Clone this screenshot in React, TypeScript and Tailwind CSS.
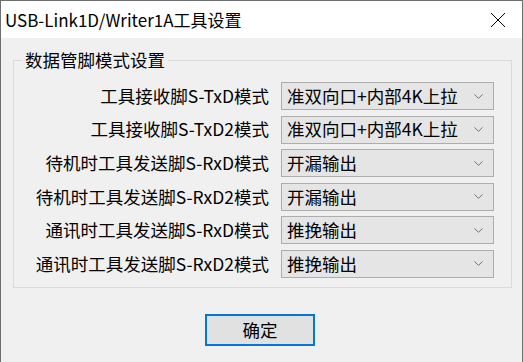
import { ChevronDown } from "lucide-react";

const rows = [
  { label: "工具接收脚S-TxD模式", value: "准双向口+内部4K上拉" },
  { label: "工具接收脚S-TxD2模式", value: "准双向口+内部4K上拉" },
  { label: "待机时工具发送脚S-RxD模式", value: "开漏输出" },
  { label: "待机时工具发送脚S-RxD2模式", value: "开漏输出" },
  { label: "通讯时工具发送脚S-RxD模式", value: "推挽输出" },
  { label: "通讯时工具发送脚S-RxD2模式", value: "推挽输出" },
];

const font = { fontFamily: '"Noto Sans CJK SC", "Noto Sans", sans-serif' };

function CloseIcon() {
  return (
    <svg width="16" height="16" viewBox="0 0 16 16" className="text-black">
      <path d="M1 1 L15 15 M15 1 L1 15" stroke="currentColor" strokeWidth="1" fill="none" />
    </svg>
  );
}

export default function App() {
  return (
    <div
      className="w-[523px] h-[362px] bg-[#f0f0f0] border-x border-t border-[#6e6e6e] flex flex-col overflow-hidden"
      style={font}
    >
      {/* title bar */}
      <div className="h-[37px] bg-white flex items-center justify-between pl-[4px] pr-[16px] shrink-0">
        <span className="text-[17px] text-black leading-none">USB-Link1D/Writer1A工具设置</span>
        <CloseIcon />
      </div>

      <fieldset className="ml-[12px] w-[499px] mt-[11px] border border-[#dadada] px-0 pt-[11px] pb-[9px]">
        <legend className="ml-[8px] px-[3px] text-[17.5px] leading-[22px] text-black">数据管脚模式设置</legend>
        <div className="grid grid-cols-[255px_213px] gap-x-[12px] gap-y-[5.6px]">
          {rows.map((row) => (
            <div key={row.label} className="contents">
              <div className="h-[28px] flex items-center justify-end text-[17.5px] text-black whitespace-nowrap">
                {row.label}
              </div>
              <div className="h-[28px] flex items-center justify-between bg-[#e5e5e5] border border-[#adadad] pl-[5px] pr-[7px] text-[17.5px] text-black whitespace-nowrap">
                <span>{row.value}</span>
                <ChevronDown size={15} strokeWidth={1.5} className="text-[#6a6a6a]" />
              </div>
            </div>
          ))}
        </div>
      </fieldset>

      <div className="flex justify-center mt-[26px] pr-[3px]">
        <button className="w-[110px] h-[32px] bg-[#e1e1e1] border-2 border-[#0078d7] text-[17.5px] text-black leading-none">
          确定
        </button>
      </div>
    </div>
  );
}
